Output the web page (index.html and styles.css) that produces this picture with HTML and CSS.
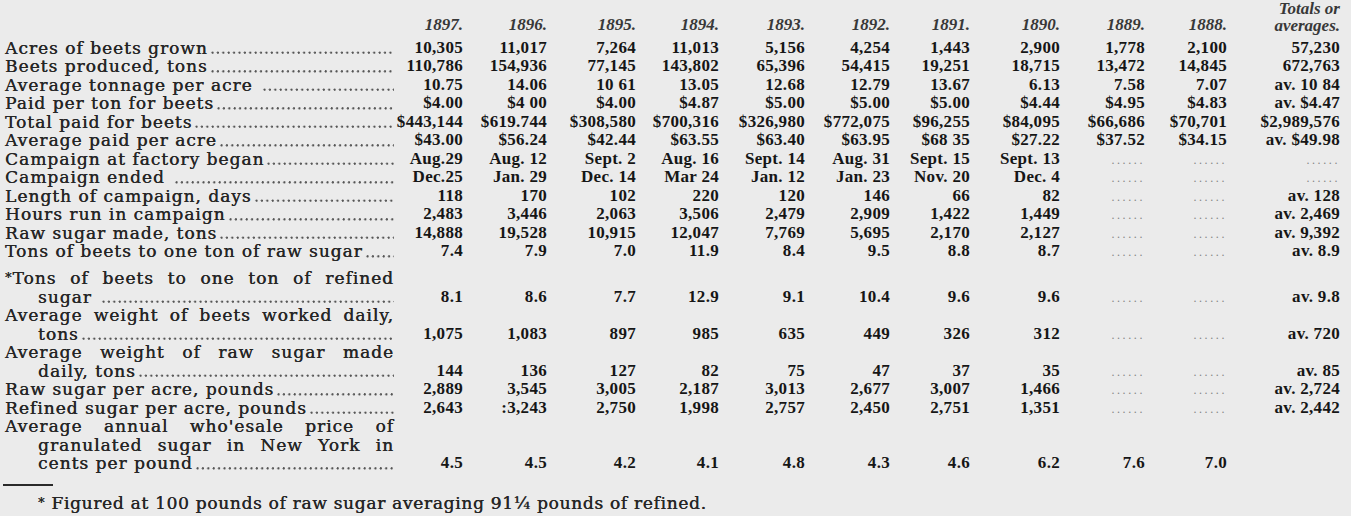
FILE: index.html
```html
<!DOCTYPE html>
<html lang="en">
<head>
<meta charset="utf-8">
<title>Beet sugar statistics, 1888–1897</title>
<link rel="stylesheet" href="styles.css">
</head>
<body>
<main class="page">
<div class="tbl" role="table">
<div class="row head" role="row">
<div role="columnheader"></div>
<div class="y" role="columnheader">1897.</div>
<div class="y" role="columnheader">1896.</div>
<div class="y" role="columnheader">1895.</div>
<div class="y" role="columnheader">1894.</div>
<div class="y" role="columnheader">1893.</div>
<div class="y" role="columnheader">1892.</div>
<div class="y" role="columnheader">1891.</div>
<div class="y" role="columnheader">1890.</div>
<div class="y" role="columnheader">1889.</div>
<div class="y" role="columnheader">1888.</div>
<div class="y tot" role="columnheader">Totals or<br>averages.</div>
</div>

<div class="row" role="row">
<div class="lbl"><div class="ln"><span class="t">Acres of beets grown</span><span class="leader"></span></div></div>
<div class="n">10,305</div><div class="n">11,017</div><div class="n">7,264</div><div class="n">11,013</div><div class="n">5,156</div><div class="n">4,254</div><div class="n">1,443</div><div class="n">2,900</div><div class="n">1,778</div><div class="n">2,100</div><div class="n">57,230</div>
</div>
<div class="row" role="row">
<div class="lbl"><div class="ln"><span class="t">Beets produced, tons</span><span class="leader"></span></div></div>
<div class="n">110,786</div><div class="n">154,936</div><div class="n">77,145</div><div class="n">143,802</div><div class="n">65,396</div><div class="n">54,415</div><div class="n">19,251</div><div class="n">18,715</div><div class="n">13,472</div><div class="n">14,845</div><div class="n">672,763</div>
</div>
<div class="row" role="row">
<div class="lbl"><div class="ln"><span class="t">Average tonnage per acre</span><span class="leader gap"></span></div></div>
<div class="n">10.75</div><div class="n">14.06</div><div class="n">10 61</div><div class="n">13.05</div><div class="n">12.68</div><div class="n">12.79</div><div class="n">13.67</div><div class="n">6.13</div><div class="n">7.58</div><div class="n">7.07</div><div class="n">av. 10 84</div>
</div>
<div class="row" role="row">
<div class="lbl"><div class="ln"><span class="t">Paid per ton for beets</span><span class="leader"></span></div></div>
<div class="n">$4.00</div><div class="n">$4 00</div><div class="n">$4.00</div><div class="n">$4.87</div><div class="n">$5.00</div><div class="n">$5.00</div><div class="n">$5.00</div><div class="n">$4.44</div><div class="n">$4.95</div><div class="n">$4.83</div><div class="n">av. $4.47</div>
</div>
<div class="row" role="row">
<div class="lbl"><div class="ln"><span class="t">Total paid for beets</span><span class="leader"></span></div></div>
<div class="n">$443,144</div><div class="n">$619.744</div><div class="n">$308,580</div><div class="n">$700,316</div><div class="n">$326,980</div><div class="n">$772,075</div><div class="n">$96,255</div><div class="n">$84,095</div><div class="n">$66,686</div><div class="n">$70,701</div><div class="n">$2,989,576</div>
</div>
<div class="row" role="row">
<div class="lbl"><div class="ln"><span class="t">Average paid per acre</span><span class="leader"></span></div></div>
<div class="n">$43.00</div><div class="n">$56.24</div><div class="n">$42.44</div><div class="n">$63.55</div><div class="n">$63.40</div><div class="n">$63.95</div><div class="n">$68 35</div><div class="n">$27.22</div><div class="n">$37.52</div><div class="n">$34.15</div><div class="n">av. $49.98</div>
</div>
<div class="row" role="row">
<div class="lbl"><div class="ln"><span class="t">Campaign at factory began</span><span class="leader"></span></div></div>
<div class="n">Aug.29</div><div class="n">Aug. 12</div><div class="n">Sept. 2</div><div class="n">Aug. 16</div><div class="n">Sept. 14</div><div class="n">Aug. 31</div><div class="n">Sept. 15</div><div class="n">Sept. 13</div><div class="n"><span class="dd">......</span></div><div class="n"><span class="dd">......</span></div><div class="n"><span class="dd">......</span></div>
</div>
<div class="row" role="row">
<div class="lbl"><div class="ln"><span class="t">Campaign ended</span><span class="leader gap"></span></div></div>
<div class="n">Dec.25</div><div class="n">Jan. 29</div><div class="n">Dec. 14</div><div class="n">Mar 24</div><div class="n">Jan. 12</div><div class="n">Jan. 23</div><div class="n">Nov. 20</div><div class="n">Dec. 4</div><div class="n"><span class="dd">......</span></div><div class="n"><span class="dd">......</span></div><div class="n"><span class="dd">......</span></div>
</div>
<div class="row" role="row">
<div class="lbl"><div class="ln"><span class="t">Length of campaign, days</span><span class="leader"></span></div></div>
<div class="n">118</div><div class="n">170</div><div class="n">102</div><div class="n">220</div><div class="n">120</div><div class="n">146</div><div class="n">66</div><div class="n">82</div><div class="n"><span class="dd">......</span></div><div class="n"><span class="dd">......</span></div><div class="n">av. 128</div>
</div>
<div class="row" role="row">
<div class="lbl"><div class="ln"><span class="t">Hours run in campaign</span><span class="leader"></span></div></div>
<div class="n">2,483</div><div class="n">3,446</div><div class="n">2,063</div><div class="n">3,506</div><div class="n">2,479</div><div class="n">2,909</div><div class="n">1,422</div><div class="n">1,449</div><div class="n"><span class="dd">......</span></div><div class="n"><span class="dd">......</span></div><div class="n">av. 2,469</div>
</div>
<div class="row" role="row">
<div class="lbl"><div class="ln"><span class="t">Raw sugar made, tons</span><span class="leader"></span></div></div>
<div class="n">14,888</div><div class="n">19,528</div><div class="n">10,915</div><div class="n">12,047</div><div class="n">7,769</div><div class="n">5,695</div><div class="n">2,170</div><div class="n">2,127</div><div class="n"><span class="dd">......</span></div><div class="n"><span class="dd">......</span></div><div class="n">av. 9,392</div>
</div>
<div class="row" role="row">
<div class="lbl"><div class="ln"><span class="t">Tons of beets to one ton of raw sugar</span><span class="leader"></span></div></div>
<div class="n">7.4</div><div class="n">7.9</div><div class="n">7.0</div><div class="n">11.9</div><div class="n">8.4</div><div class="n">9.5</div><div class="n">8.8</div><div class="n">8.7</div><div class="n"><span class="dd">......</span></div><div class="n"><span class="dd">......</span></div><div class="n">av. 8.9</div>
</div>
<div class="row gap" role="row">
<div class="lbl"><div class="just"><span class="star">*</span>Tons of beets to one ton of refined</div><div class="ln ind"><span class="t">sugar</span><span class="leader gap"></span></div></div>
<div class="n">8.1</div><div class="n">8.6</div><div class="n">7.7</div><div class="n">12.9</div><div class="n">9.1</div><div class="n">10.4</div><div class="n">9.6</div><div class="n">9.6</div><div class="n"><span class="dd">......</span></div><div class="n"><span class="dd">......</span></div><div class="n">av. 9.8</div>
</div>
<div class="row" role="row">
<div class="lbl"><div class="just">Average weight of beets worked daily,</div><div class="ln ind"><span class="t">tons</span><span class="leader"></span></div></div>
<div class="n">1,075</div><div class="n">1,083</div><div class="n">897</div><div class="n">985</div><div class="n">635</div><div class="n">449</div><div class="n">326</div><div class="n">312</div><div class="n"><span class="dd">......</span></div><div class="n"><span class="dd">......</span></div><div class="n">av. 720</div>
</div>
<div class="row" role="row">
<div class="lbl"><div class="just">Average weight of raw sugar made</div><div class="ln ind"><span class="t">daily, tons</span><span class="leader"></span></div></div>
<div class="n">144</div><div class="n">136</div><div class="n">127</div><div class="n">82</div><div class="n">75</div><div class="n">47</div><div class="n">37</div><div class="n">35</div><div class="n"><span class="dd">......</span></div><div class="n"><span class="dd">......</span></div><div class="n">av. 85</div>
</div>
<div class="row" role="row">
<div class="lbl"><div class="ln"><span class="t">Raw sugar per acre, pounds</span><span class="leader"></span></div></div>
<div class="n">2,889</div><div class="n">3,545</div><div class="n">3,005</div><div class="n">2,187</div><div class="n">3,013</div><div class="n">2,677</div><div class="n">3,007</div><div class="n">1,466</div><div class="n"><span class="dd">......</span></div><div class="n"><span class="dd">......</span></div><div class="n">av. 2,724</div>
</div>
<div class="row" role="row">
<div class="lbl"><div class="ln"><span class="t">Refined sugar per acre, pounds</span><span class="leader"></span></div></div>
<div class="n">2,643</div><div class="n">:3,243</div><div class="n">2,750</div><div class="n">1,998</div><div class="n">2,757</div><div class="n">2,450</div><div class="n">2,751</div><div class="n">1,351</div><div class="n"><span class="dd">......</span></div><div class="n"><span class="dd">......</span></div><div class="n">av. 2,442</div>
</div>
<div class="row" role="row">
<div class="lbl"><div class="just">Average annual who'esale price of</div><div class="just ind">granulated sugar in New York in</div><div class="ln ind"><span class="t">cents per pound</span><span class="leader"></span></div></div>
<div class="n">4.5</div><div class="n">4.5</div><div class="n">4.2</div><div class="n">4.1</div><div class="n">4.8</div><div class="n">4.3</div><div class="n">4.6</div><div class="n">6.2</div><div class="n">7.6</div><div class="n">7.0</div><div class="n"></div>
</div>
</div>
<div class="fn-rule"></div>
<p class="fn"><span class="star">*</span> Figured at 100 pounds of raw sugar averaging 91¼ pounds of refined.</p>
</main>
</body>
</html>
```
FILE: styles.css
```css
html, body {
  margin: 0;
  padding: 0;
  background: #ebebeb;
}

.page {
  width: 1351px;
  height: 516px;
  box-sizing: border-box;
  padding: 0 0 0 5px;
  overflow: hidden;
  color: #222;
}

.tbl {
  width: 1335px;
}

.row {
  display: grid;
  grid-template-columns: 389px 69px 84px 89px 83px 86px 85px 80px 90px 85px 82px 113px;
  align-items: end;
}

.row.head {
  height: 38.75px;
  box-sizing: border-box;
  padding-bottom: 4.5px;
}

.row.gap {
  padding-top: 8.4px;
}

.y {
  font-family: "Liberation Serif", serif;
  font-style: italic;
  font-weight: bold;
  font-size: 17px;
  line-height: 18.5px;
  text-align: right;
  color: #383838;
  white-space: nowrap;
}

.y.tot {
  line-height: 17px;
}

.lbl {
  font-family: "DejaVu Serif", serif;
  font-size: 17px;
  letter-spacing: 1px;
  line-height: 18.5px;
  color: #262626;
  text-shadow: 0.35px 0 0 #262626;
}

.ln {
  display: flex;
  height: 18.5px;
}

.ln .t {
  white-space: nowrap;
}

.just {
  height: 18.5px;
  text-align: justify;
  text-align-last: justify;
}

.ind {
  padding-left: 33px;
}

.leader {
  flex: 1;
  margin-left: 2px;
  background-image: radial-gradient(circle at 2.5px 14px, #555 0, #555 0.85px, transparent 1.45px);
  background-size: 5.4px 18.5px;
  background-repeat: repeat-x;
}

.leader.gap {
  margin-left: 9px;
}

.star {
  font-size: 13px;
  line-height: 10px;
  vertical-align: 2px;
}

.n {
  font-family: "Liberation Serif", serif;
  font-weight: bold;
  font-size: 17px;
  line-height: 18.5px;
  height: 18.5px;
  letter-spacing: 0.3px;
  text-align: right;
  white-space: nowrap;
  color: #161616;
}

.dd {
  font-size: 12px;
  line-height: 10px;
  letter-spacing: 2.6px;
  font-weight: normal;
  color: #858585;
}

.fn-rule {
  width: 50px;
  height: 2px;
  background: #2a2a2a;
  margin: 11.5px 0 0 -2px;
}

.fn {
  margin: 7.75px 0 0;
  padding-left: 33px;
  font-family: "DejaVu Serif", serif;
  font-size: 17px;
  letter-spacing: 0.7px;
  line-height: 18.5px;
  color: #262626;
  text-shadow: 0.35px 0 0 #262626;
}
```
